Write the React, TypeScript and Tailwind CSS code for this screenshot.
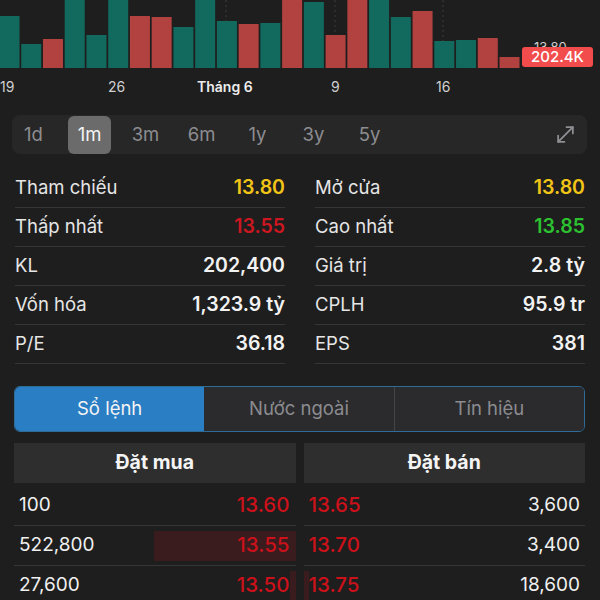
import React from "react";

const bars: [number, "g" | "r"][] = [
  [16, "g"], [44, "g"], [39, "r"], [0, "g"], [35, "g"], [0, "g"], [16, "r"], [17, "r"],
  [27, "g"], [0, "g"], [21, "g"], [24, "r"], [23, "g"], [0, "r"], [2, "g"], [35, "r"],
  [0, "r"], [0, "g"], [17, "g"], [11, "r"], [41, "g"], [40, "g"], [38, "r"], [57, "r"],
];

const stats: [string, string, string, string, string, string][] = [
  ["Tham chiếu", "13.80", "text-[#f2c417]", "Mở cửa", "13.80", "text-[#f2c417]"],
  ["Thấp nhất", "13.55", "text-[#cc1620]", "Cao nhất", "13.85", "text-[#2cc130]"],
  ["KL", "202,400", "text-[#f2f2f2]", "Giá trị", "2.8 tỷ", "text-[#f2f2f2]"],
  ["Vốn hóa", "1,323.9 tỷ", "text-[#f2f2f2]", "CPLH", "95.9 tr", "text-[#f2f2f2]"],
  ["P/E", "36.18", "text-[#f2f2f2]", "EPS", "381", "text-[#f2f2f2]"],
];

const book = [
  { bq: "100", bp: "13.60", sp: "13.65", sq: "3,600", bw: 0, sw: 0 },
  { bq: "522,800", bp: "13.55", sp: "13.70", sq: "3,400", bw: 142, sw: 0 },
  { bq: "27,600", bp: "13.50", sp: "13.75", sq: "18,600", bw: 6, sw: 5 },
];

function Chart() {
  const grid = [117, 226, 335, 443];
  return (
    <div className="relative h-[70px]">
      <svg width="600" height="70" className="block">
        {grid.map((x) => (
          <line key={x} x1={x} y1={0} x2={x} y2={68} stroke="#3c3c3c" strokeWidth={1} strokeDasharray="2 3" />
        ))}
        {bars.map(([top, c], i) => (
          <rect
            key={i}
            x={-0.5 + i * 21.74}
            y={top}
            width={20}
            height={68 - top}
            fill={c === "g" ? "#116a5d" : "#b14240"}
          />
        ))}
      </svg>
      <span className="absolute left-[534px] top-[41px] text-[13px] leading-none text-[#cfcfcf]">13.80</span>
      <div className="absolute left-[522px] top-[47px] flex h-[20px] w-[71px] items-center justify-center rounded-[3px] bg-[#f24c4c] text-[15px] font-medium text-white">
        202.4K
      </div>
    </div>
  );
}

function AxisLabels() {
  const labels: [string, number, boolean][] = [
    ["19", 0, false],
    ["26", 108, false],
    ["Tháng 6", 197, true],
    ["9", 331, false],
    ["16", 436, false],
  ];
  return (
    <div className="relative h-[34px]">
      {labels.map(([t, x, b]) => (
        <span
          key={t}
          className={
            b
              ? "absolute top-[8px] text-[14px] leading-[18px] font-semibold text-[#ececec]"
              : "absolute top-[8px] text-[14px] leading-[18px] text-[#cfcfcf]"
          }
          style={{ left: x }}
        >
          {t}
        </span>
      ))}
    </div>
  );
}

function ExpandIcon() {
  return (
    <svg width="21" height="21" viewBox="0 0 20 20" fill="none" stroke="#8e8e93" strokeWidth="1.7" strokeLinecap="round" strokeLinejoin="round">
      <path d="M3 17L17 3" />
      <path d="M11 3h6v6" />
      <path d="M3 11v6h6" />
    </svg>
  );
}

function Timeframes() {
  const items = ["1d", "1m", "3m", "6m", "1y", "3y", "5y"];
  return (
    <div className="mx-[12px] mt-[11px] mr-[13px] flex h-[39px] items-center justify-between rounded-lg bg-[#272727]">
      <div className="flex h-full items-center gap-[13px]">
        {items.map((t) => (
          <div
            key={t}
            className={
              t === "1m"
                ? "flex h-[38px] w-[43px] items-center justify-center rounded-md bg-[#6b6b6b] text-[18.5px] text-[#f4f4f4]"
                : "flex h-[38px] w-[43px] items-center justify-center text-[18.5px] text-[#8d8d91]"
            }
          >
            {t}
          </div>
        ))}
      </div>
      <div className="pr-[11px]">
        <ExpandIcon />
      </div>
    </div>
  );
}

function Stats() {
  return (
    <div className="mt-[15px] grid grid-cols-2 gap-x-[30px] px-[15px]">
      {stats.map((r) => (
        <React.Fragment key={r[0]}>
          <div className="flex h-[39px] items-center justify-between border-b border-[#363636] pb-[1px]">
            <span className="text-[18.5px] text-[#e6e6e6]">{r[0]}</span>
            <span className={"text-[19.5px] font-semibold " + r[2]}>{r[1]}</span>
          </div>
          <div className="flex h-[39px] items-center justify-between border-b border-[#363636] pb-[1px]">
            <span className="text-[18.5px] text-[#e6e6e6]">{r[3]}</span>
            <span className={"text-[19.5px] font-semibold " + r[5]}>{r[4]}</span>
          </div>
        </React.Fragment>
      ))}
    </div>
  );
}

function Tabs() {
  return (
    <div className="mt-[22px] ml-[14px] mr-[15px] flex h-[46px] overflow-hidden rounded-md border border-[#2e6b97]">
      <div className="flex flex-1 items-center justify-center bg-[#2a7ec4] text-[18.5px] text-[#f4f4f4]">Sổ lệnh</div>
      <div className="flex flex-1 items-center justify-center border-r border-[#454545] bg-[#2b2b2d] text-[18.5px] text-[#8c8c90]">Nước ngoài</div>
      <div className="flex flex-1 items-center justify-center bg-[#2b2b2d] text-[18.5px] text-[#8c8c90]">Tín hiệu</div>
    </div>
  );
}

function OrderBook() {
  return (
    <div className="mt-[11px] ml-[14px] mr-[15px] grid grid-cols-2 gap-x-[8px]">
      <div className="flex h-[40px] items-center justify-center bg-[#2e2e2e] text-[19.5px] font-bold text-[#f4f4f4]">Đặt mua</div>
      <div className="flex h-[40px] items-center justify-center bg-[#2e2e2e] text-[19.5px] font-bold text-[#f4f4f4]">Đặt bán</div>
      <div className="col-span-2 h-[3px]" />
      {book.map((r) => (
        <React.Fragment key={r.bq}>
          <div className="relative flex h-[40px] items-center justify-between border-b border-[#363636] pl-[5px] pr-[6px]">
            {r.bw > 0 && (
              <div className="absolute right-0 top-[5px] bottom-[4px] bg-[#3a1c1e]" style={{ width: r.bw }} />
            )}
            <span className="relative text-[19px] text-[#f0f0f0]">{r.bq}</span>
            <span className="relative text-[20.5px] font-medium text-[#cc111a]">{r.bp}</span>
          </div>
          <div className="relative flex h-[40px] items-center justify-between border-b border-[#363636] pl-[5px] pr-[5px]">
            {r.sw > 0 && (
              <div className="absolute left-0 top-[5px] bottom-[4px] bg-[#3a1c1e]" style={{ width: r.sw }} />
            )}
            <span className="relative text-[20.5px] font-medium text-[#cc111a]">{r.sp}</span>
            <span className="relative text-[19px] text-[#f0f0f0]">{r.sq}</span>
          </div>
        </React.Fragment>
      ))}
    </div>
  );
}

export default function App() {
  return (
    <div
      className="h-[600px] w-[600px] overflow-hidden bg-[#1e1e1e]"
      style={{ fontFamily: "Inter, 'Noto Sans', sans-serif" }}
    >
      <Chart />
      <AxisLabels />
      <Timeframes />
      <Stats />
      <Tabs />
      <OrderBook />
    </div>
  );
}
